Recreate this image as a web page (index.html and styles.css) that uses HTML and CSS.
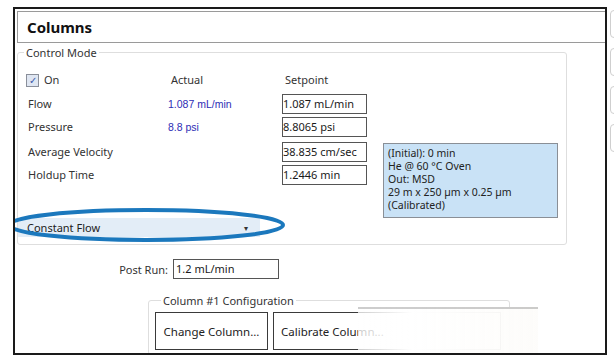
FILE: index.html
```html
<!DOCTYPE html>
<html lang="en">
<head>
  <meta charset="UTF-8">
  <title>Columns</title>
  <link rel="stylesheet" href="styles.css">
</head>
<body>

  <div class="window">
    <div class="header">Columns</div>

    <fieldset class="control-mode">
      <legend>Control Mode</legend>

      <div class="grid">
        <label class="check"><span class="box">&#10003;</span>On</label>
        <div class="col-head">Actual</div>
        <div class="col-head">Setpoint</div>
        <div></div>

        <div class="name">Flow</div>
        <div class="actual">1.087 mL/min</div>
        <div class="field">1.087 mL/min</div>
        <div></div>

        <div class="name">Pressure</div>
        <div class="actual">8.8 psi</div>
        <div class="field">8.8065 psi</div>
        <div></div>

        <div class="name">Average Velocity</div>
        <div></div>
        <div class="field">38.835 cm/sec</div>
        <div class="info">
          <div>(Initial): 0 min</div>
          <div>He @ 60 &deg;C Oven</div>
          <div>Out: MSD</div>
          <div>29 m x 250 &micro;m x 0.25 &micro;m</div>
          <div>(Calibrated)</div>
        </div>

        <div class="name">Holdup Time</div>
        <div></div>
        <div class="field">1.2446 min</div>
      </div>

      <div class="dropdown">
        <span>Constant Flow</span>
        <span class="arrow">&#9662;</span>
      </div>
    </fieldset>

    <div class="post-run">
      <span class="post-label">Post Run:</span>
      <div class="field wide">1.2 mL/min</div>
    </div>

    <fieldset class="config">
      <legend>Column #1 Configuration</legend>
      <div class="buttons">
        <button type="button" class="btn-change">Change Column...</button>
        <button type="button" class="btn-calibrate">Calibrate Column...</button>
      </div>
    </fieldset>

    <!-- highlight ring drawn over the flow mode dropdown -->
    <svg class="ring" width="284" height="36" viewBox="0 0 284 36">
      <ellipse cx="140" cy="17" rx="137" ry="15" fill="none" stroke="#1b78bd" stroke-width="4"/>
    </svg>
    <div class="fade"></div>
  </div>

  <div class="side">
    <div class="tab"></div>
    <div class="tab"></div>
    <div class="tab"></div>
    <div class="tab"></div>
  </div>

</body>
</html>
```

FILE: styles.css
```css
body {
  margin: 0;
  padding: 7px 0 0 13px;
  background: #fff;
  font-family: "Noto Sans", sans-serif;
  font-size: 11px;
  color: #333;
  display: flex;
  overflow: hidden;
}

.window {
  position: relative;
  box-sizing: border-box;
  width: 594px;
  height: 348px;
  border: 2px solid #1a1a1a;
  overflow: hidden;
  flex-shrink: 0;
}

.header {
  margin: 2px 0 0 2px;
  height: 30px;
  border: 1px solid #9a9a9a;
  border-right: none;
  padding-left: 9px;
  font-size: 15px;
  font-weight: bold;
  color: #111;
  line-height: 30px;
}

fieldset {
  border: 1px solid #dedede;
  border-radius: 3px;
  padding: 0;
  margin: 0;
}

legend {
  margin-left: 6px;
  padding: 0 2px;
  line-height: 15px;
  color: #333;
}

.control-mode {
  margin: 2px 0 0 2px;
  width: 550px;
  box-sizing: border-box;
  padding-bottom: 7px;
}

.grid {
  display: grid;
  grid-template-columns: 142px 114px 101px 175px;
  grid-template-rows: 22px 23px 25px 23px 20px 33px;
  margin: 12px 0 0 8px;
}

.grid > div, .grid > label {
  height: 20px;
  line-height: 20px;
}

.check {
  display: flex;
  align-items: center;
  height: 16px !important;
  line-height: 16px !important;
}

.check .box {
  width: 11px;
  height: 11px;
  border: 1px solid #8a8f9a;
  background: #dfe6f2;
  color: #3a57a8;
  font-size: 10px;
  line-height: 11px;
  text-align: center;
  margin-right: 5px;
}

.col-head {
  height: 16px !important;
  line-height: 16px !important;
  padding-left: 3px;
}

.name {
  padding-left: 2px;
}

.actual {
  font-family: "Liberation Sans", sans-serif;
  font-size: 10.5px;
  color: #2d2db5;
}

.field {
  box-sizing: border-box;
  width: 85px;
  height: 20px;
  border: 1px solid #555;
  background: #fff;
  color: #1a1a1a;
  line-height: 17px !important;
  padding-left: 0;
  white-space: nowrap;
}

.info {
  grid-column: 4;
  grid-row: 4 / span 3;
  height: 75px !important;
  box-sizing: border-box;
  margin-top: 1px;
  background: #c9e2f6;
  border: 1px solid #8a8f96;
  padding: 3px 0 0 4px;
  color: #222;
}

.info div {
  height: 13px;
  line-height: 13px;
  font-size: 10.5px;
}

.dropdown {
  width: 242px;
  height: 19px;
  background: #e3edf7;
  display: flex;
  align-items: center;
  justify-content: space-between;
  padding: 0 12px 0 9px;
  box-sizing: border-box;
  color: #222;
}

.dropdown .arrow {
  font-size: 8px;
  color: #333;
}

.post-run {
  display: flex;
  align-items: center;
  margin: 14px 0 0 99px;
}

.post-label {
  width: 54px;
  text-align: right;
  margin-right: 5px;
}

.field.wide {
  width: 106px;
  padding-left: 2px;
}

.config {
  margin: 14px 0 0 133px;
  width: 362px;
  box-sizing: border-box;
  padding: 4px 0 4px 6px;
}

.buttons {
  display: flex;
  gap: 5px;
}

button {
  font-family: "Noto Sans", sans-serif;
  font-size: 11.5px;
  color: #222;
  background: #fff;
  border: 1px solid #3a3a3a;
  height: 38px;
  padding: 0;
}

.btn-change {
  width: 113px;
}

.btn-calibrate {
  width: 228px;
  text-align: left;
  padding-left: 7px;
}

.ring {
  position: absolute;
  left: -9px;
  top: 199px;
}

.fade {
  position: absolute;
  left: 343px;
  top: 298px;
  width: 180px;
  height: 46px;
  background: linear-gradient(to right, rgba(255,255,255,0.75), #fff 30%, rgba(253,252,250,0.95));
  border-top: 2px solid rgba(90,90,90,0.3);
}

.side {
  margin-left: 3px;
  padding-top: 3px;
  display: flex;
  flex-direction: column;
  gap: 10px;
}

.tab {
  width: 20px;
  height: 26px;
  border: 1px solid #cfcfcf;
  border-radius: 4px;
  flex-shrink: 0;
}
```
